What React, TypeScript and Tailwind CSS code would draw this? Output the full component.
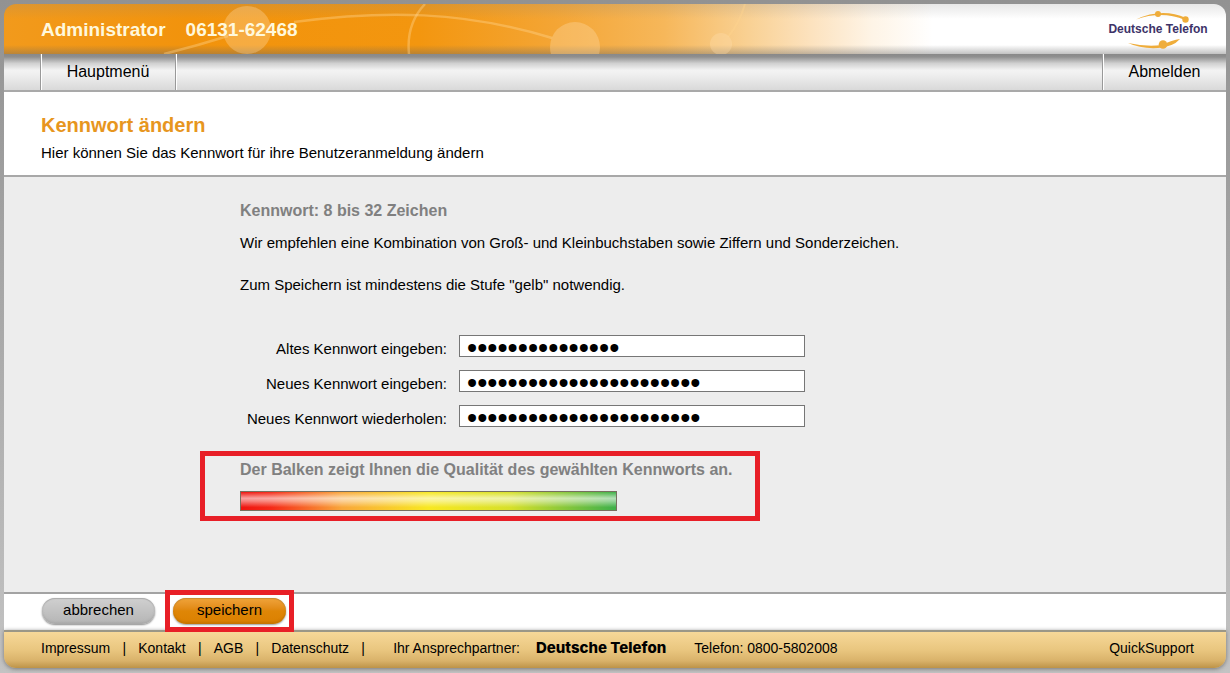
import { useState } from 'react';

const footerLinks = ['Impressum', 'Kontakt', 'AGB', 'Datenschutz'];

function HeaderArt() {
  return (
    <svg className="absolute left-0 top-0" width="860" height="50" viewBox="0 0 860 50" aria-hidden="true">
      <g fill="none" stroke="#ffd58f" strokeOpacity="0.4">
        <path d="M160 50 Q192 42 224 32" strokeWidth="2.5" />
        <path d="M290 18 C380 6 460 7 548 34" strokeWidth="2.5" />
        <path d="M421 0 Q402 20 405 50" strokeWidth="2.5" />
        <path d="M741 0 Q736 18 724 33" strokeWidth="2" />
      </g>
      <g fill="#ffe0b0" fillOpacity="0.32">
        <circle cx="243" cy="26" r="24" />
        <circle cx="571" cy="43" r="25" />
        <circle cx="717" cy="40" r="11" />
      </g>
    </svg>
  );
}

function Logo() {
  return (
    <div className="relative flex h-10 w-24 items-center justify-center">
      <svg className="absolute inset-0" width="96" height="40" viewBox="0 0 96 40" aria-hidden="true">
        <g fill="#efad3b">
          <path d="M26 10.5 Q52 -1.5 76 9 L75 11 Q52 1.5 26 10.5Z" />
          <circle cx="48" cy="5" r="3" />
          <circle cx="75.5" cy="10.5" r="3.2" />
          <path d="M18 34 Q36 38 52 36 Q62 31 70 30 Q63 38 48 39 Q31 40 18 34Z" />
          <circle cx="53" cy="35.5" r="4.3" />
        </g>
      </svg>
      <span className="relative whitespace-nowrap text-xs font-bold leading-5 text-[#3d3368]">Deutsche Telefon</span>
    </div>
  );
}

function Header() {
  return (
    <header className="relative flex h-[50px] items-center justify-between overflow-hidden rounded-t-xl bg-[linear-gradient(to_bottom,#8883_0,#8880_30%,#8880_82%,#6666_100%),linear-gradient(to_right,#f29a1c_0%,#f2930c_15%,#f3960f_34%,#f4a534_45%,#f6b75a_54%,#f9d194_61%,#fce2be_66%,#fef4e6_71%,#fff_76%)] pl-[37px] pr-5">
      <HeaderArt />
      <div className="relative flex gap-5 pt-0.5 text-[19px] font-bold leading-6 text-[#fff8dc]">
        <span>Administrator</span>
        <span>06131-62468</span>
      </div>
      <Logo />
    </header>
  );
}

function Nav() {
  return (
    <nav className="flex h-[38px] justify-between border-b-2 border-[#a9a9a9] bg-[linear-gradient(to_bottom,#888_0,#8f8f8f_8%,#d0d0d0_26%,#f3f3f3_45%,#f0f0f0_55%,#d9d9d9_100%)] pl-9 text-base text-black">
      <a
        href="#menu"
        className="flex w-[136px] items-center justify-center border-x border-[#999] shadow-[inset_1px_0_#fff,1px_0_#fff]"
      >
        Hauptmenü
      </a>
      <a
        href="#logout"
        className="flex w-[124px] items-center justify-center border-l border-[#999] shadow-[inset_1px_0_#fff]"
      >
        Abmelden
      </a>
    </nav>
  );
}

type PasswordRowProps = {
  id: string;
  label: string;
  initial: string;
};

function PasswordRow({ id, label, initial }: PasswordRowProps) {
  const [value, setValue] = useState(initial);
  return (
    <div className="flex gap-3">
      <label htmlFor={id} className="w-[207px] pt-1 text-right leading-5">
        {label}
      </label>
      <input
        id={id}
        type="password"
        value={value}
        onChange={(e) => setValue(e.target.value)}
        className="h-[22px] w-[346px] border border-[#767676] bg-white px-[7px] pt-1 text-[29px] leading-5 outline-none"
      />
    </div>
  );
}

function QualityBar() {
  return (
    <div className="-ml-10 mt-[22px] w-[560px] border-[5px] border-[#e81f27] px-[35px] pb-[5px] pt-1">
      <h3 className="whitespace-nowrap text-base font-bold leading-5 text-[#808080]">
        Der Balken zeigt Ihnen die Qualität des gewählten Kennworts an.
      </h3>
      <div
        role="img"
        aria-label="Qualität des Kennworts"
        className="mt-[11px] h-5 w-[377px] border border-[#77705f] bg-[linear-gradient(to_bottom,#fff0_0,#fff9_35%,#fff7_50%,#fff0_85%),linear-gradient(to_right,#ee1410_0,#f52a18_8%,#f9a73a_27%,#f8e822_50%,#d6e02a_72%,#3eb04a_100%)]"
      />
    </div>
  );
}

function Footer() {
  return (
    <footer className="flex h-[38px] items-center justify-between rounded-b-xl border-t-2 border-[#9b9787] bg-[linear-gradient(to_bottom,#f7d898_0,#e9c67f_50%,#d9b26a_80%,#bd9348_100%)] pb-1 pl-[37px] pr-8 text-sm text-black shadow-[0_1px_4px_#777]">
      <div className="flex items-center whitespace-nowrap">
        {footerLinks.map((name) => (
          <span key={name} className="flex">
            <a href={`#${name.toLowerCase()}`}>{name}</a>
            <span className="w-7 text-center">|</span>
          </span>
        ))}
        <span className="ml-4">Ihr Ansprechpartner:</span>
        <strong className="ml-4 font-[Inter,sans-serif] text-[15px] font-extrabold leading-5">Deutsche Telefon</strong>
        <span className="ml-7">Telefon: 0800-5802008</span>
      </div>
      <a href="#quicksupport">QuickSupport</a>
    </footer>
  );
}

export default function App() {
  return (
    <div className="flex min-h-screen flex-col bg-linear-to-b from-[#929292] to-[#c3c3c3] px-1 pb-[5px] pt-1 font-['Liberation_Sans',Arial,sans-serif] text-[15px] text-black">
      <Header />
      <Nav />

      <section className="border-b-2 border-[#a8a8a8] bg-white px-[37px] pb-3 pt-[19px]">
        <h1 className="text-xl font-bold leading-7 text-[#e7961e]">Kennwort ändern</h1>
        <p className="mt-1 leading-5">Hier können Sie das Kennwort für ihre Benutzeranmeldung ändern</p>
      </section>

      <form className="flex flex-1 flex-col" onSubmit={(e) => e.preventDefault()}>
        <div className="flex-1 bg-[#ededed] pb-10 pl-[236px] pr-10 pt-6">
          <h2 className="text-base font-bold leading-5 text-[#808080]">Kennwort: 8 bis 32 Zeichen</h2>
          <p className="mt-3 leading-5">
            Wir empfehlen eine Kombination von Groß- und Kleinbuchstaben sowie Ziffern und Sonderzeichen.
          </p>
          <p className="mt-[22px] leading-5">Zum Speichern ist mindestens die Stufe "gelb" notwendig.</p>

          <div className="mt-10 flex flex-col gap-[11px]">
            <PasswordRow id="old" label="Altes Kennwort eingeben:" initial="altesKennwort01" />
            <PasswordRow id="new" label="Neues Kennwort eingeben:" initial="neuesKennwort0123456789" />
            <PasswordRow id="repeat" label="Neues Kennwort wiederholen:" initial="neuesKennwort0123456789" />
          </div>

          <QualityBar />
        </div>

        {/* Buttons */}
        <div className="flex h-[38px] items-start gap-[18px] border-t-2 border-[#a3a3a3] bg-white px-[38px] pt-1">
          <button
            type="button"
            className="h-[26px] w-[113px] rounded-full bg-linear-to-b from-[#d0d0d0] to-[#b5b5b5] pb-0.5 shadow-[0_1px_2px_#888,inset_0_-2px_2px_#9996,inset_0_1px_1px_#aaa]"
          >
            abbrechen
          </button>
          <div className="relative">
            <button
              type="submit"
              className="h-[26px] w-[113px] rounded-full bg-linear-to-b from-[#f0a43a] via-[#df8606] to-[#db8000] pb-0.5 shadow-[0_1px_2px_#999,inset_0_-2px_2px_#a8640066,inset_0_1px_1px_#c98a30]"
            >
              speichern
            </button>
            <div className="pointer-events-none absolute -inset-x-2 -inset-y-2 border-[5px] border-[#e81f27]" />
          </div>
        </div>
      </form>

      <Footer />
    </div>
  );
}
